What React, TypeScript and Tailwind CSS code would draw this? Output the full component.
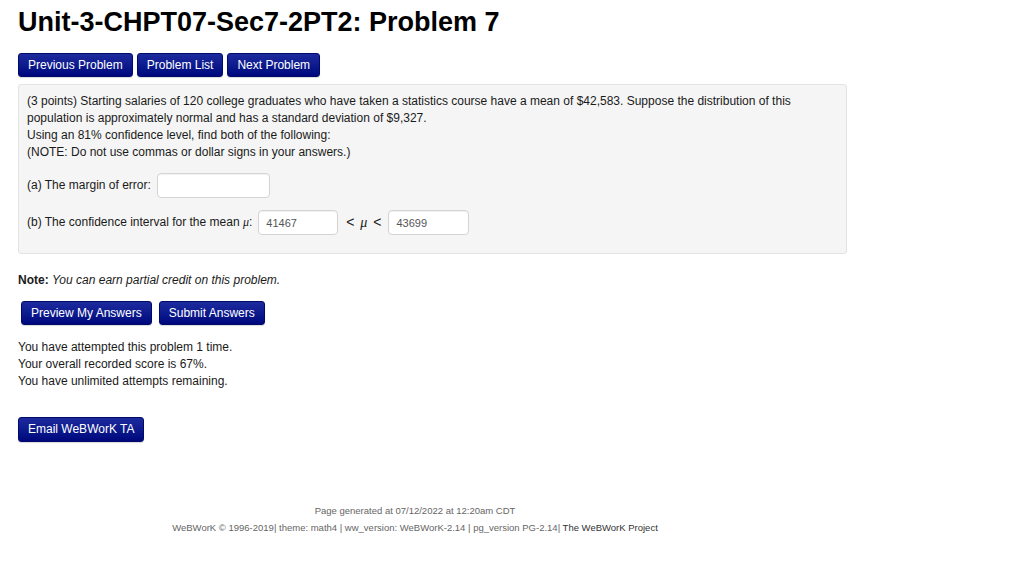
const btn =
  "bg-gradient-to-b from-[#1d2a9e] to-[#00067d] text-white text-[12px] leading-none px-[9px] h-[24px] rounded-[3px] border border-[#000a6a] shadow-[0_1px_1px_rgba(0,0,0,0.15)]";

const input =
  "bg-white border border-[#d4d4d4] rounded-[4px] h-[25px] px-[7px] text-[11px] text-[#555] shadow-[inset_0_1px_1px_rgba(0,0,0,0.06)] outline-none";

export default function App() {
  return (
    <div className="min-h-[577px] bg-white text-[#1a1a1a] font-['Liberation_Sans',Arial,sans-serif]">
      <div className="px-[18px] pt-[6px]">
        <h1 className="text-[27px] font-bold leading-[32px] text-black">
          Unit-3-CHPT07-Sec7-2PT2: Problem 7
        </h1>

        <div className="flex gap-[4px] mt-[15px]">
          <button className={btn}>Previous Problem</button>
          <button className={btn}>Problem List</button>
          <button className={btn}>Next Problem</button>
        </div>

        <div className="mt-[7px] w-[829px] h-[170px] bg-[#f5f5f5] border border-[#e3e3e3] rounded-[3px] px-[8px] pt-[8px] text-[12px] leading-[17px]">
          <p>
            (3 points) Starting salaries of 120 college graduates who have taken a statistics course have a mean of
            $42,583. Suppose the distribution of this population is approximately normal and has a standard deviation
            of $9,327.
            <br />
            Using an 81% confidence level, find both of the following:
            <br />
            (NOTE: Do not use commas or dollar signs in your answers.)
          </p>

          <div className="flex items-center gap-[6px] mt-[12px]">
            <span>(a) The margin of error:</span>
            <input className={`${input} w-[113px]`} defaultValue="" />
          </div>

          <div className="flex items-center mt-[12px]">
            <span>
              (b) The confidence interval for the mean <i className="font-['Liberation_Serif',serif]">μ</i>:
            </span>
            <input className={`${input} w-[80px] ml-[6px]`} defaultValue="41467" />
            <span className="ml-[8px] mr-[6px] text-[14px] tracking-[1px]">
              &lt; <i className="font-['Liberation_Serif',serif]">μ</i> &lt;
            </span>
            <input className={`${input} w-[81px]`} defaultValue="43699" />
          </div>
        </div>

        <p className="mt-[18px] text-[12px] leading-[17px]">
          <b>Note:</b> <i>You can earn partial credit on this problem.</i>
        </p>

        <div className="flex gap-[7px] mt-[12px] ml-[3px]">
          <button className={btn}>Preview My Answers</button>
          <button className={btn}>Submit Answers</button>
        </div>

        <div className="mt-[14px] text-[12px] leading-[17px]">
          <p>You have attempted this problem 1 time.</p>
          <p>Your overall recorded score is 67%.</p>
          <p>You have unlimited attempts remaining.</p>
        </div>

        <div className="mt-[26px]">
          <button className={`${btn} h-[25px]`}>Email WeBWorK TA</button>
        </div>
      </div>

      <div className="w-[794px] ml-[18px] mt-[60px] text-center text-[9.5px] leading-[17px] text-[#666]">
        <p>Page generated at 07/12/2022 at 12:20am CDT</p>
        <p>
          WeBWorK © 1996-2019| theme: math4 | ww_version: WeBWorK-2.14 | pg_version PG-2.14|{" "}
          <span className="text-[#333]">The WeBWorK Project</span>
        </p>
      </div>
    </div>
  );
}
